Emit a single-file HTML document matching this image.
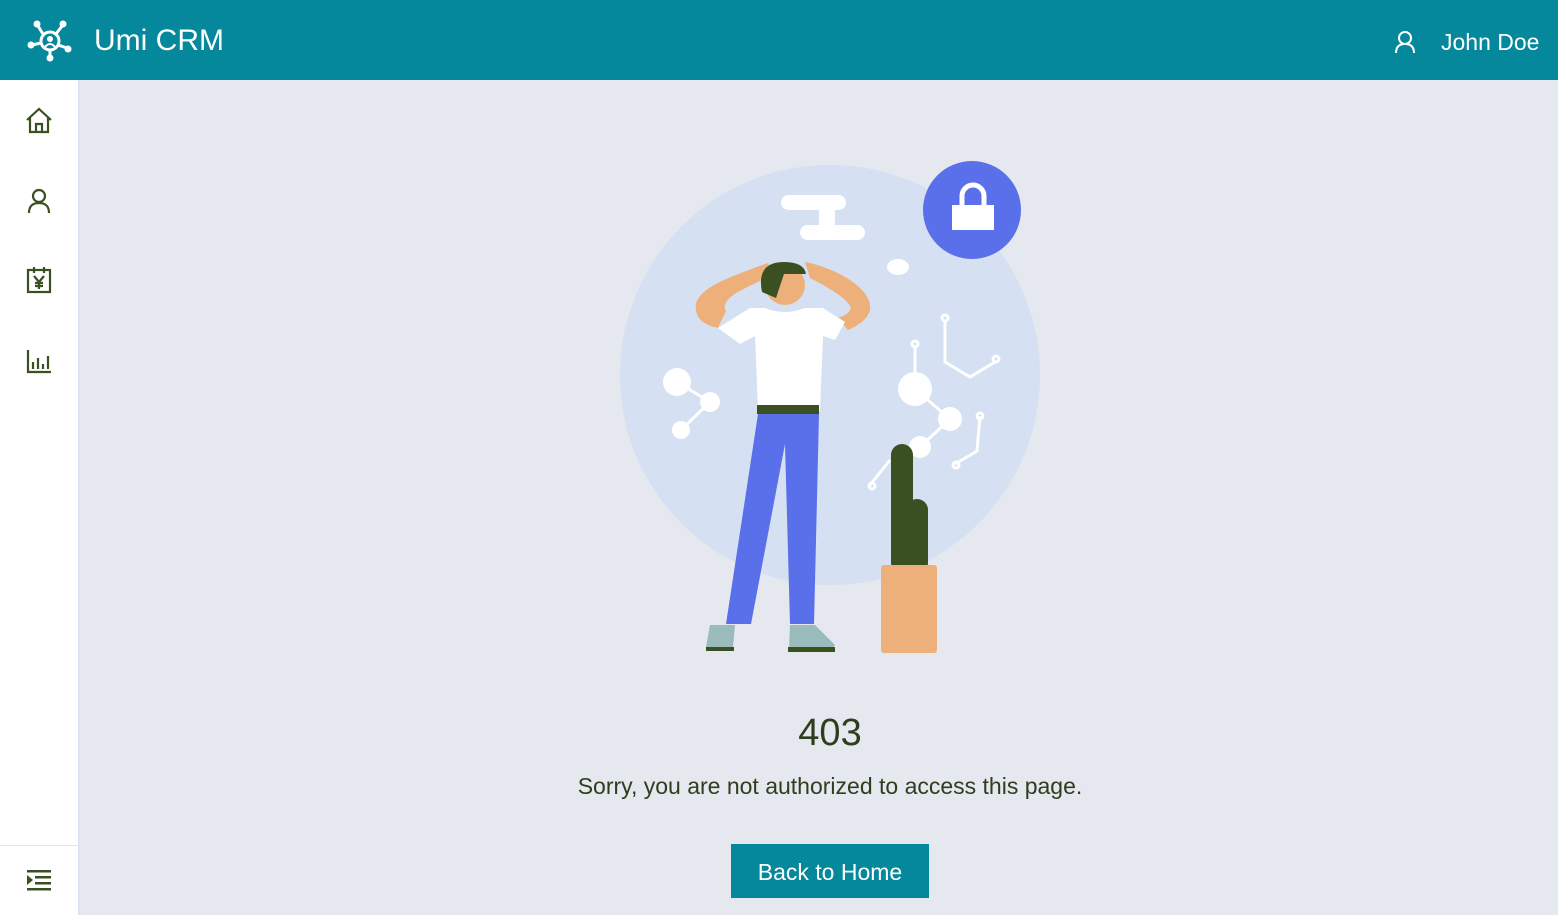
<!DOCTYPE html>
<html><head><meta charset="utf-8"><style>
*{margin:0;padding:0;box-sizing:border-box}
body{width:1558px;height:915px;overflow:hidden;background:#e5e8ee;font-family:"Liberation Sans",sans-serif;position:relative}
.hdr{position:absolute;left:0;top:0;width:1558px;height:80px;background:#05889b;color:#fff}
.side{position:absolute;left:0;top:80px;width:80px;height:835px;background:#fff;border-right:2px solid #dde5f3}
.t{position:absolute;color:#2f3d1f;text-align:center;left:330px;width:1000px}
</style></head><body>
<div class="hdr">
<svg style="position:absolute;left:26px;top:18px" width="48" height="46" viewBox="0 0 48 46" fill="#fff" stroke="#fff" stroke-width="3">
<circle cx="24" cy="23" r="9" fill="none"/><circle cx="24" cy="21" r="3" stroke="none"/><path d="M19 29q5-6 10 0" fill="none" stroke-width="2"/>
<line x1="17" y1="16" x2="12" y2="8"/><circle cx="11" cy="6" r="3.5" stroke="none"/>
<line x1="30" y1="16" x2="36" y2="8"/><circle cx="37" cy="6" r="3.5" stroke="none"/>
<line x1="15" y1="25" x2="6" y2="27"/><circle cx="5" cy="27" r="3.5" stroke="none"/>
<line x1="32" y1="27" x2="41" y2="30"/><circle cx="42" cy="31" r="3.5" stroke="none"/>
<line x1="24" y1="32" x2="24" y2="38"/><circle cx="24" cy="40" r="3.5" stroke="none"/>
</svg>
<div style="position:absolute;left:94px;top:24px;font-size:30px">Umi CRM</div>
<svg style="position:absolute;left:1394px;top:30px" width="22" height="24" viewBox="0 0 22 24" fill="none" stroke="#fff" stroke-width="2"><circle cx="11" cy="8" r="6"/><path d="M2 23q0-9 9-9t9 9"/></svg>
<div style="position:absolute;left:1441px;top:29px;font-size:23px">John Doe</div>
</div>
<div class="side">
<svg style="position:absolute;left:25px;top:27px" width="28" height="28" viewBox="0 0 28 28" fill="none" stroke="#3a5020" stroke-width="2.2"><path d="M2 13L14 2l12 11M5 11v14h18V11M11 25v-8h6v8"/></svg>
<svg style="position:absolute;left:27px;top:108px" width="24" height="26" viewBox="0 0 24 26" fill="none" stroke="#3a5020" stroke-width="2.2"><circle cx="12" cy="8" r="6"/><path d="M2 25q0-10 10-10t10 10"/></svg>
<svg style="position:absolute;left:26px;top:186px" width="26" height="28" viewBox="0 0 26 28" fill="none" stroke="#3a5020" stroke-width="2.2"><rect x="2" y="4" width="22" height="22"/><path d="M8 1v6M18 1v6M8 10l5 6 5-6M13 16v7M9 17h8M9 20h8"/></svg>
<svg style="position:absolute;left:26px;top:268px" width="26" height="26" viewBox="0 0 26 26" fill="none" stroke="#3a5020" stroke-width="2.2"><path d="M2 2v22h23M7 14v7M12 10v11M17 16v5M22 8v13"/></svg>
<div style="position:absolute;left:0;top:765px;width:78px;border-top:1px solid #e4e4ea"></div>
<svg style="position:absolute;left:26px;top:788px" width="26" height="24" viewBox="0 0 26 24" fill="#3a5020"><rect x="1" y="2" width="24" height="2.5"/><rect x="9" y="8" width="16" height="2.5"/><rect x="9" y="14" width="16" height="2.5"/><rect x="1" y="20" width="24" height="2.5"/><path d="M1 7l6 5-6 5z"/></svg>
</div>
<svg style="position:absolute;left:600px;top:150px" width="450" height="510" viewBox="0 0 450 510">
<circle cx="230" cy="225" r="210" fill="#d5e0f2"/>
<g fill="#fff"><rect x="181" y="45" width="65" height="15" rx="7.5"/><rect x="219" y="55" width="16" height="25"/><rect x="200" y="75" width="65" height="15" rx="7.5"/><ellipse cx="298" cy="117" rx="11" ry="8"/>
<circle cx="77" cy="232" r="14"/><circle cx="110" cy="252" r="10"/><circle cx="81" cy="280" r="9"/><circle cx="315" cy="239" r="17"/><circle cx="350" cy="269" r="12"/><circle cx="320" cy="297" r="11"/></g>
<g stroke="#fff" stroke-width="3" fill="none"><path d="M77 232L110 252 81 280M315 239L350 269 320 297M315 239V195M345 170v42l25 15 25-15M380 266l-3 35-22 13M290 310l-20 25"/>
<circle cx="315" cy="194" r="3"/><circle cx="345" cy="168" r="3"/><circle cx="396" cy="209" r="3"/><circle cx="380" cy="266" r="3"/><circle cx="356" cy="315" r="3"/><circle cx="272" cy="336" r="3"/></g>
<circle cx="372" cy="60" r="49" fill="#5a6fea"/>
<rect x="352" y="55" width="42" height="25" fill="#fff"/><path d="M362 56v-10a11 11 0 0 1 22 0v10" stroke="#fff" stroke-width="5" fill="none"/>
<rect x="291" y="294" width="22" height="130" rx="11" fill="#3a5020"/><rect x="306" y="349" width="22" height="75" rx="11" fill="#3a5020"/>
<rect x="281" y="415" width="56" height="88" rx="3" fill="#edb07b"/>
<path d="M118 178q-25-5-22-25 5-15 40-28 20-8 32-12l6 12q-20 8-38 18-15 10-10 18zM205 112q25 5 45 18 22 15 20 30-3 12-22 20l-10-12q15-5 12-12-5-10-40-28z" fill="#edb07b"/>
<path d="M118 178l32-20 15 0q20 8 40 0l18 0 22 14-10 18-12-4-3 75h-62l-3-75-15 8z" fill="#fff"/>
<circle cx="185" cy="135" r="20" fill="#edb07b"/><path d="M162 142q-6-30 22-30 20 0 22 12h-22l-8 24z" fill="#3a5020"/>
<rect x="157" y="255" width="62" height="9" fill="#3a5020"/>
<path d="M158 264h61l-5 210h-24l-5-180-34 180h-25z" fill="#5a6fea"/>
<path d="M110 475h25l-2 22h-27zM190 475h25l20 20-4 5h-42z" fill="#9bb"/><path d="M106 497h28v4h-28zM188 497h47v5h-47z" fill="#3a5020"/>
</svg>
<div class="t" style="top:712px;font-size:38px">403</div>
<div class="t" style="top:773px;font-size:23px">Sorry, you are not authorized to access this page.</div>
<div style="position:absolute;left:731px;top:844px;width:198px;height:54px;background:#05889b;color:#fff;font-size:23px;text-align:center;line-height:56px">Back to Home</div>
</body></html>
